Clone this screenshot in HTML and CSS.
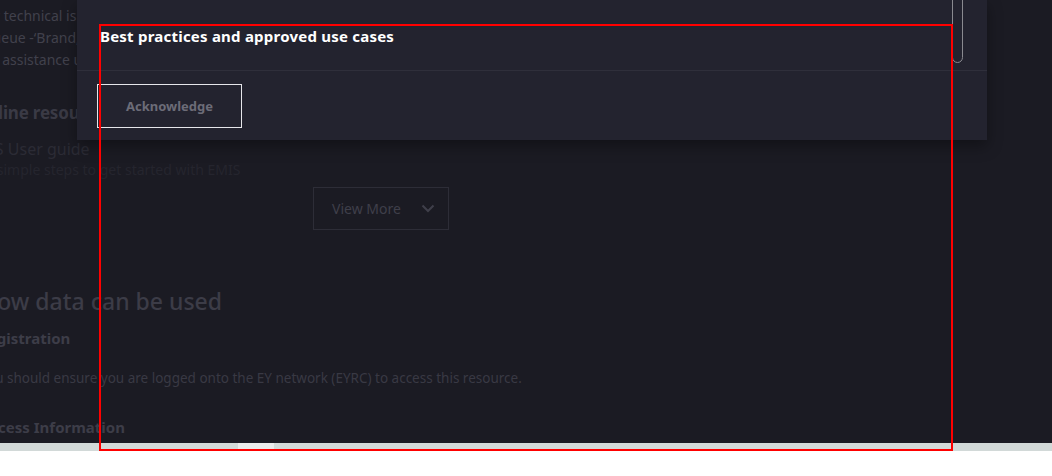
FILE: index.html
```html
<!DOCTYPE html>
<html>
<head>
<meta charset="utf-8">
<link rel="stylesheet" href="styles.css">
</head>
<body>
<div class="viewport">
  <div class="page">
    <p class="dim1 l1">for technical issues please raise a ticket</p>
    <p class="dim1 l2">queue -‘Brand, Marketing and Communications’</p>
    <p class="dim1 l3">For assistance using the tool</p>
    <h3 class="h-res">Online resources</h3>
    <p class="guide">EMIS User guide</p>
    <p class="steps">Some simple steps to get started with EMIS</p>
    <div class="more-row">
      <div class="more-btn">View More
        <svg class="chev" width="14" height="9" viewBox="0 0 14 9"><path d="M1.5 1.5 L7 7 L12.5 1.5" fill="none" stroke="currentColor" stroke-width="2"/></svg>
      </div>
    </div>
    <h2 class="h-data">How data can be used</h2>
    <h4 class="h-sub reg">Registration</h4>
    <p class="body">You should ensure you are logged onto the EY network (EYRC) to access this resource.</p>
    <h4 class="h-sub access">Access Information</h4>
  </div>
  <div class="modal">
    <div class="modal-body">
      <div class="modal-title">Best practices and approved use cases</div>
      <div class="thumb-outline"></div>
    </div>
    <div class="modal-foot">
      <button class="ack">Acknowledge</button>
    </div>
  </div>
  <div class="hscroll"><div class="hthumb"></div></div>
  <div class="annot"></div>
</div>
</body>
</html>
```
FILE: styles.css
```css
html, body {
  margin: 0;
  padding: 0;
  background: #ffffff;
}
.viewport {
  position: relative;
  width: 1052px;
  height: 451px;
  overflow: hidden;
  background: #1b1b23;
  font-family: "Noto Sans", "Open Sans", sans-serif;
}
.page {
  margin-left: -20px;
  padding-top: 5px;
  display: flex;
  flex-direction: column;
}
.page p, .page h2, .page h3, .page h4 { margin: 0; white-space: nowrap; }
.dim1 {
  font-size: 14px;
  line-height: 22px;
  color: #41414c;
}
.page .l1 { margin-left: 1px; }
.page .l2 { margin-left: 4px; }
.page .l3 { margin-left: -3px; }
.page .h-res {
  margin-top: 30px;
  font-size: 17px;
  line-height: 24px;
  font-weight: 700;
  color: #3a3a45;
  margin-left: -6px;
  letter-spacing: -0.2px;
}
.page .guide {
  margin-top: 13px;
  font-size: 16px;
  line-height: 22px;
  color: #2b2b35;
  margin-left: -14px;
}
.page .steps {
  font-size: 14px;
  line-height: 20px;
  color: #25252e;
  margin-left: -24px;
}
.more-row {
  margin-top: 7px;
  padding-left: 333px;
}
.more-btn {
  height: 41px;
  border: 1px solid #2d2d37;
  display: flex;
  align-items: center;
  justify-content: flex-start;
  gap: 20px;
  padding-left: 18px;
  box-sizing: content-box;
  width: 116px;
  font-size: 14px;
  color: #3f3f4a;
}
.chev { color: #3f3f4a; }
.page .h-data {
  margin-top: 56px;
  font-size: 23px;
  line-height: 30px;
  font-weight: 500;
  color: #3c3c47;
  margin-left: 0;
}
.page .h-sub {
  font-size: 15px;
  line-height: 20px;
  font-weight: 700;
  color: #3d3d48;
}
.page .reg {
  margin-top: 12px;
  margin-left: -2px;
}
.page .body {
  margin-top: 20px;
  font-size: 13.5px;
  line-height: 20px;
  color: #393944;
  margin-left: 0;
}
.page .access { margin-top: 29px; margin-left: 0; }

.modal {
  position: absolute;
  left: 77px;
  top: 0;
  width: 910px;
  height: 140px;
  background: #23232f;
  box-shadow: 0 6px 14px rgba(0,0,0,0.35);
  display: flex;
  flex-direction: column;
}
.modal-body {
  position: relative;
  height: 71px;
  border-bottom: 1px solid #2f2f3b;
  box-sizing: border-box;
  padding: 26px 0 0 23px;
}
.modal-title {
  font-size: 15px;
  line-height: 20px;
  font-weight: 700;
  letter-spacing: 0.22px;
  color: #ffffff;
}
.thumb-outline {
  position: absolute;
  left: 875px;
  top: -40px;
  width: 9px;
  height: 101px;
  border: 1px solid #8a8a90;
  border-radius: 0 0 6px 6px;
}
.modal-foot {
  padding: 13px 0 0 20px;
}
.ack {
  width: 145px;
  height: 44px;
  background: transparent;
  border: 1px solid #e6e6ea;
  color: #6c6c78;
  font-family: "Noto Sans", sans-serif;
  font-weight: 700;
  font-size: 13px;
  letter-spacing: 0;
  padding: 0;
}
.annot {
  position: absolute;
  left: 99px;
  top: 24px;
  width: 854px;
  height: 427px;
  box-sizing: border-box;
  border: 2px solid #ff0000;
}
.hscroll {
  position: absolute;
  left: 0;
  bottom: 0;
  width: 1052px;
  height: 8px;
  background: #d2d9d8;
}
.hthumb {
  margin-left: 238px;
  width: 36px;
  height: 8px;
  background: #e9ebeb;
}
```
